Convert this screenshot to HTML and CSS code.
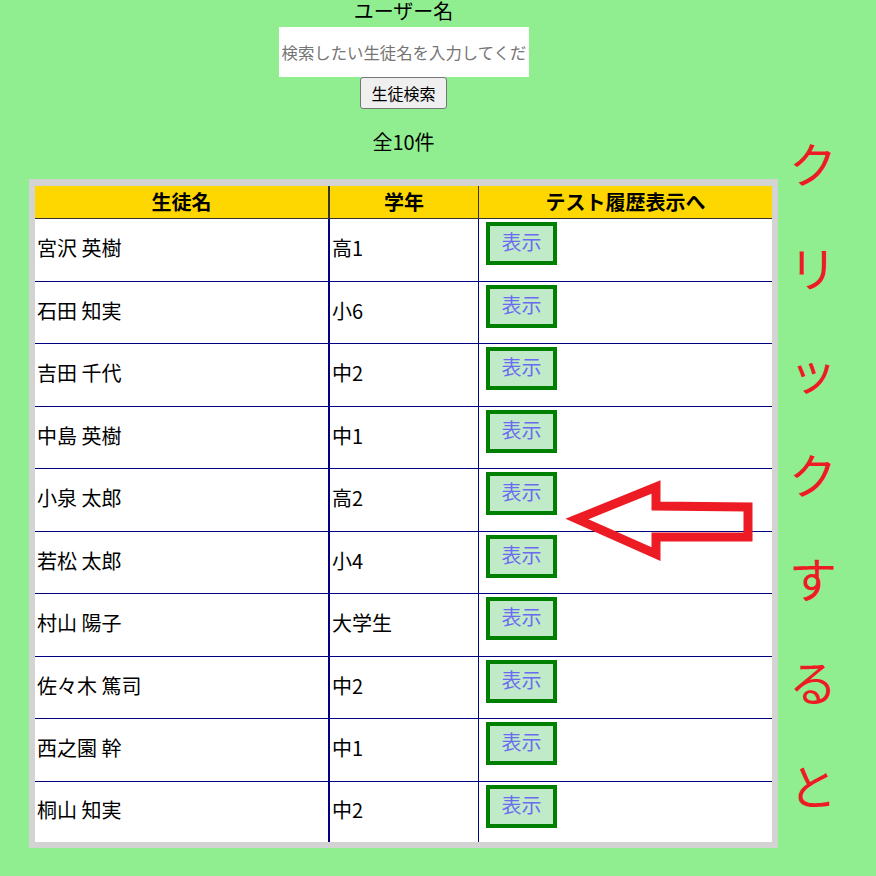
FILE: index.html
```html
<!DOCTYPE html>
<html lang="ja">
<head>
<meta charset="utf-8">
<title>生徒検索</title>
<link rel="stylesheet" href="styles.css">
</head>
<body>
<div class="page">
  <div class="main">
    <div class="label">ユーザー名</div>
    <input class="search" type="text" placeholder="検索したい生徒名を入力してください">
    <button class="search-btn" type="button">生徒検索</button>
    <p class="count">全10件</p>
    <table class="students">
      <thead>
        <tr><th class="c-name">生徒名</th><th class="c-grade">学年</th><th class="c-act">テスト履歴表示へ</th></tr>
      </thead>
      <tbody>
        <tr><td class="c-name">宮沢 英樹</td><td class="c-grade">高1</td><td class="c-act"><button class="show">表示</button></td></tr>
        <tr><td class="c-name">石田 知実</td><td class="c-grade">小6</td><td class="c-act"><button class="show">表示</button></td></tr>
        <tr><td class="c-name">吉田 千代</td><td class="c-grade">中2</td><td class="c-act"><button class="show">表示</button></td></tr>
        <tr><td class="c-name">中島 英樹</td><td class="c-grade">中1</td><td class="c-act"><button class="show">表示</button></td></tr>
        <tr><td class="c-name">小泉 太郎</td><td class="c-grade">高2</td><td class="c-act"><button class="show">表示</button></td></tr>
        <tr><td class="c-name">若松 太郎</td><td class="c-grade">小4</td><td class="c-act"><button class="show">表示</button></td></tr>
        <tr><td class="c-name">村山 陽子</td><td class="c-grade">大学生</td><td class="c-act"><button class="show">表示</button></td></tr>
        <tr><td class="c-name">佐々木 篤司</td><td class="c-grade">中2</td><td class="c-act"><button class="show">表示</button></td></tr>
        <tr><td class="c-name">西之園 幹</td><td class="c-grade">中1</td><td class="c-act"><button class="show">表示</button></td></tr>
        <tr><td class="c-name">桐山 知実</td><td class="c-grade">中2</td><td class="c-act"><button class="show">表示</button></td></tr>
      </tbody>
    </table>
  </div>
  <div class="side">
    <span>ク</span><span>リ</span><span>ッ</span><span>ク</span><span>す</span><span>る</span><span>と</span>
  </div>
</div>
<svg class="arrow" width="200" height="100" viewBox="560 470 200 100" xmlns="http://www.w3.org/2000/svg">
  <polygon points="577,519 656,487 656,506 748,507 748,537 656,537 656,554" fill="none" stroke="#ED1C24" stroke-width="9" stroke-linejoin="miter" stroke-miterlimit="10"/>
</svg>
</body>
</html>
```
FILE: styles.css
```css
html, body {
  margin: 0;
  padding: 0;
}
body {
  background: #90ee90;
  font-family: "Noto Sans CJK JP", "Noto Sans", sans-serif;
  color: #000;
  position: relative;
  width: 876px;
  height: 876px;
  overflow: hidden;
}
.page {
  display: flex;
  padding-left: 29px;
}
.main {
  width: 749px;
  display: flex;
  flex-direction: column;
  align-items: center;
}
.label {
  font-size: 20px;
  line-height: 22px;
  height: 22px;
  margin-bottom: 5px;
}
.search {
  width: 250px;
  height: 50px;
  box-sizing: border-box;
  border: none;
  outline: none;
  background: #fff;
  padding: 0 0 0 3px;
  font-family: "Noto Sans CJK JP", sans-serif;
  font-size: 16.4px;
  margin: 0;
}
.search::placeholder {
  color: #757575;
}
.search-btn {
  margin: 0;
  height: 32px;
  width: 87px;
  box-sizing: border-box;
  padding: 0;
  font-family: "Noto Sans CJK JP", sans-serif;
  font-size: 16px;
  line-height: 22px;
  color: #000;
  background: #efefef;
  border: 1px solid #767676;
  border-radius: 3px;
}
.count {
  margin: 21px 0 25px;
  font-size: 20px;
  line-height: 24px;
  height: 24px;
}
.students {
  width: 749px;
  border-collapse: separate;
  border-spacing: 0;
  border: 6px solid #d3d3d3;
  border-top-width: 7px;
  background: #fff;
  table-layout: fixed;
  font-size: 20px;
}
.students th {
  background: #ffd700;
  font-weight: bold;
  height: 32px;
  padding: 0 2px;
  line-height: 26px;
  border-bottom: 1px solid #333;
  text-align: center;
}
.students td {
  padding: 0 2px 3px;
  text-align: left;
  vertical-align: middle;
  border-bottom: 1px solid #000080;
  line-height: 26px;
}
.students tbody tr {
  height: 62.5px;
}
.students tbody tr:last-child td {
  border-bottom: none;
}
.students tbody tr:last-child {
  height: 60px;
}
.students .c-name {
  width: 295px;
  box-sizing: border-box;
  border-right: 2px solid #000080;
}
.students .c-grade {
  width: 149px;
  box-sizing: border-box;
  border-right: 1px solid #000080;
}
.students th.c-name,
.students th.c-grade {
  border-right-color: #333;
}
.students td.c-act {
  vertical-align: top;
  padding: 3px 0 0 7px;
}
.show {
  width: 71px;
  height: 43px;
  box-sizing: border-box;
  border: 4px solid #008000;
  background: #c1ebc8;
  color: #6b6bf2;
  font-family: "Noto Sans CJK JP", sans-serif;
  font-size: 20px;
  line-height: 26px;
  padding: 0 0 3px;
  margin: 0;
  display: block;
}
.side {
  width: 70px;
  padding-top: 111px;
  display: flex;
  flex-direction: column;
  align-items: center;
  color: #ed1c24;
  font-size: 48px;
}
.side span {
  display: block;
  height: 103.7px;
  line-height: 103.7px;
}
.arrow {
  position: absolute;
  left: 560px;
  top: 470px;
}
```
